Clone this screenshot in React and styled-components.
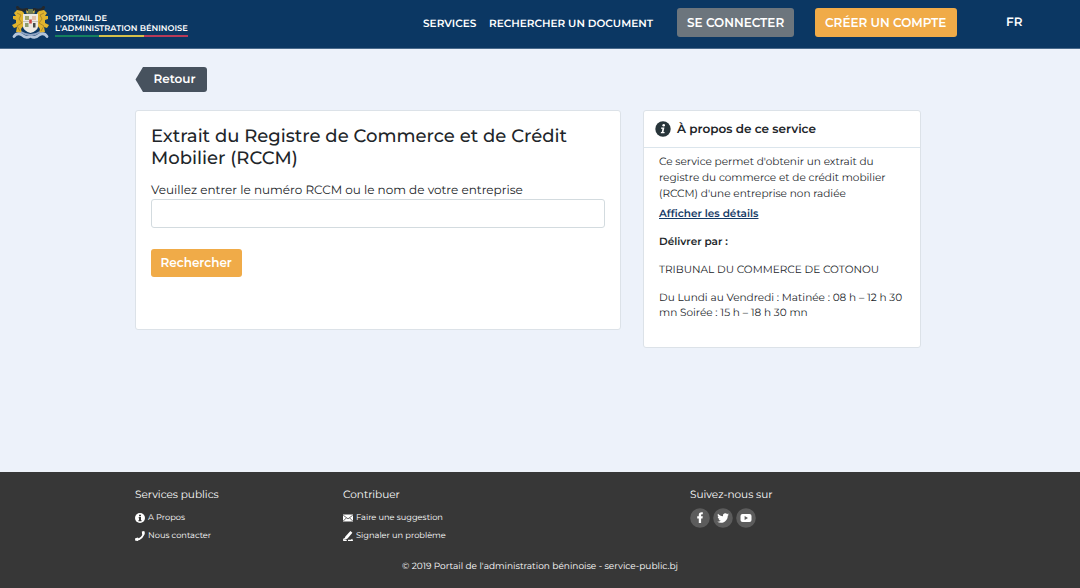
import React from 'react';
import styled, { createGlobalStyle } from 'styled-components';

const GlobalStyle = createGlobalStyle`
  * { box-sizing: border-box; }
  body {
    margin: 0;
    background: #edf2fa;
    color: #212529;
    font-family: Montserrat, Inter, "Liberation Sans", sans-serif;
    text-rendering: geometricPrecision;
  }
  a { color: inherit; text-decoration: none; }
  h1, h2, p, ul { margin: 0; padding: 0; }
  svg { display: block; flex: none; }
`;

const Page = styled.div`
  display: flex;
  flex-direction: column;
  height: 588px;
  overflow: hidden;
`;

const Line = styled.span`
  display: block;
  white-space: nowrap;
`;

/* Header */
const Header = styled.header`
  display: flex;
  align-items: flex-start;
  height: 49px;
  flex: none;
  padding-left: 11px;
  background: #0b3763;
  border-bottom: 1px solid #4a6a8c;
  color: #fff;
  font-weight: 600;
`;

const Brand = styled.a`
  display: flex;
  width: 412px;
  padding-top: 5px;
`;

const BrandName = styled.div`
  width: 133px;
  margin-left: 5px;
  padding-top: 9px;
  font-size: 8.25px;
  line-height: 10px;
`;

const Flag = styled.div`
  height: 2px;
  margin-top: 1px;
  background: linear-gradient(90deg, #14805f 33.3%, #d5c04a 33.3% 66.6%, #b83a58 66.6%);
`;

const NavLink = styled.a`
  width: ${(p) => p.$width}px;
  padding-top: 16px;
  font-size: 10.5px;
  line-height: 16px;
`;

const Button = styled.button`
  display: block;
  width: ${(p) => p.$width}px;
  height: ${(p) => p.$height || 29}px;
  padding: 0 0 0 ${(p) => p.$inset || 10}px;
  border: 0;
  border-radius: 3px;
  background: ${(p) => p.$color};
  color: #fff;
  font: 600 12px/18px Montserrat, Inter, sans-serif;
  text-align: left;
`;

const Actions = styled.div`
  display: flex;
  gap: 21px;
  padding-top: 8px;
`;

const Language = styled.a`
  margin-left: 49px;
  padding-top: 14px;
  font-size: 12px;
  line-height: 18px;
`;

/* Content */
const Main = styled.main`
  width: 786px;
  height: 423px;
  flex: none;
  margin-left: 135px;
  padding-top: 18px;
`;

const Back = styled.a`
  display: block;
  width: 72px;
  height: 25px;
  padding-left: 18.5px;
  border-radius: 3px;
  background: #47525e;
  clip-path: polygon(0.5px 50%, 8px 0, 100% 0, 100% 100%, 8px 100%);
  color: #fff;
  font-size: 12px;
  font-weight: 600;
  line-height: 26px;
`;

const Columns = styled.div`
  display: flex;
  align-items: flex-start;
  justify-content: space-between;
  margin-top: 18px;
`;

const Card = styled.section`
  width: ${(p) => p.$width}px;
  height: ${(p) => p.$height}px;
  background: #fff;
  border: 1px solid #dce2e8;
  border-radius: 3px;
`;

const Form = styled.form`
  padding: 15px 15px 0;
`;

const Title = styled.h1`
  font-size: 18.03px;
  font-weight: 500;
  line-height: 21.5px;
`;

const Label = styled.label`
  display: block;
  margin-top: 13px;
  font-size: 12px;
  line-height: 18px;
`;

const Input = styled.input`
  display: block;
  width: 454px;
  height: 29px;
  margin: -1px 0 21px;
  border: 1px solid #d3dbdf;
  border-radius: 3px;
  background: #fff;
`;

const CardHeader = styled.h2`
  display: flex;
  align-items: center;
  gap: 6px;
  height: 37px;
  padding-left: 11px;
  border-bottom: 1px solid #dbe5ec;
  font-size: 12px;
  font-weight: 600;
`;

const About = styled.div`
  padding: 6px 15px;
  font-size: 10.5px;
  line-height: 15.75px;
`;

const Details = styled.a`
  display: block;
  margin: 5px 0 12px;
  color: #143a66;
  font-weight: 600;
  text-decoration: underline;
`;

const Paragraph = styled.p`
  margin-bottom: 12px;
  font-weight: ${(p) => (p.$strong ? 600 : 400)};
`;

/* Footer */
const Footer = styled.footer`
  height: 116px;
  padding-left: 135px;
  background: #373737;
  color: #fff;
`;

const FooterColumns = styled.div`
  display: flex;
  height: 86px;
  padding-top: 15px;
`;

const FooterColumn = styled.div`
  width: ${(p) => p.$width}px;
`;

const FooterTitle = styled.h2`
  margin-bottom: 6px;
  font-size: 10.5px;
  font-weight: 400;
  line-height: 16px;
`;

const FooterLink = styled.a`
  display: flex;
  align-items: center;
  gap: 3px;
  height: 18px;
  font-size: 8.25px;
`;

const FooterText = styled.span`
  padding-top: 1px;
  line-height: 17px;
`;

const Socials = styled.div`
  display: flex;
  gap: 3px;
  margin-top: -1px;
`;

const Copyright = styled.p`
  padding: 1px 0 0 267px;
  font-size: 9px;
  line-height: 16px;
`;

const Emblem = () => (
  <svg width="39" height="36" viewBox="0 0 39 36">
    <g fill="none" stroke="#25282b" strokeWidth="3" strokeLinecap="round">
      <path d="M16 4.500 Q8 6.500 6.500 2.500" />
      <path d="M23 4.500 Q31 6.500 32.500 2.500" />
    </g>
    <g fill="#e1b42d">
      <path d="M11 6 L6 5 3 8 5 11 2 11 2 14 5 15 5 18 1 20 3 23 6 22 5 27 11 28 10 24 13 20 13 8Z" />
      <path d="M28 6 L33 5 36 8 34 11 37 11 37 14 34 15 34 18 38 20 36 23 33 22 34 27 28 28 29 24 26 20 26 8Z" />
    </g>
    <g fill="none" stroke="#98762c" strokeWidth=".7">
      <path d="M6 8 L10 10 8 14 11 18 6 21 9 26" />
      <path d="M33 8 L29 10 31 14 28 18 33 21 30 26" />
    </g>
    <path d="M12 9 H27 V22 Q26 26 19.500 28 Q13 26 12 22Z" fill="#ece9e1" />
    <path d="M14 11h4v4h-4z" fill="#a3a66a" />
    <path d="M21 11h4v4h-4z" fill="#e4c0a9" />
    <path d="M14 18h3.500v4H14z" fill="#8d9b6b" />
    <path d="M22 18h2.500v4.500H22z" fill="#454b49" />
    <path d="M18.200 14.500h2.600v4h-2.600z" fill="#c8433f" />
    <path d="M12 16.300h6v.8h-6zM21 16.300h6v.8h-6z" fill="#b8b7b0" />
    <path d="M15 4.500 Q16 7 19.500 5.500 Q23 7 24 4.500 L23.500 8.500 H15.500Z" fill="#c8ae48" />
    <path d="M17 4h5v4h-5z" fill="#6f7d50" />
    <path d="M3 31.500 Q6 27 11 30 Q15 34 19.500 31 Q24 34 28 30 Q33 27 36 31.500" fill="none" stroke="#b4c5da" strokeWidth="2.800" strokeLinecap="round" />
    <path d="M10 27 Q19.500 33 29 27" fill="none" stroke="#8ea3c2" strokeWidth="2" />
  </svg>
);

const SolidInfo = () => (
  <svg width="10" height="10" viewBox="0 0 10 10">
    <circle cx="5" cy="5" r="5" fill="#fff" />
    <path d="M4 1.700h2v1.500H4z M3.700 4h2.300v3h.5v1.200H3.500V7H4V5.200h-.3z" fill="#373737" />
  </svg>
);

const InfoIcon = () => (
  <svg width="16" height="16" viewBox="0 0 16 16">
    <circle cx="8" cy="8" r="7.700" fill="#28353a" />
    <circle cx="8.700" cy="4.200" r="1.300" fill="#fff" />
    <path d="M6.200 6.600h3.200L8.500 11h1.200l-.3 1.200H5.700L6 11h.8l.6-3.200H6z" fill="#fff" />
  </svg>
);

const PhoneIcon = () => (
  <svg width="10" height="10" viewBox="0 0 10 10">
    <path d="M8.500 1.500C9 5 5.300 8.600 1.500 8.600" fill="none" stroke="#fff" strokeWidth="2" />
    <path d="M6.800.5 9.100 0 9.600.8 9.600 3.500 7.200 3.500zM.2 7.300 3 6.500 4 8.600 2.700 9.900 0 9.500z" fill="#fff" />
  </svg>
);

const MailIcon = () => (
  <svg width="10" height="8" viewBox="0 0 10 8">
    <path d="M0 .5h10v7H0z" fill="#fff" />
    <path d="M.3 1.300 5 4.800l4.700-3.500M.3 7l3-3M9.700 7l-3-3" fill="none" stroke="#373737" strokeWidth=".75" />
  </svg>
);

const PenIcon = () => (
  <svg width="10" height="10" viewBox="0 0 10 10">
    <path d="M7.400 0 9.400 1.800 4.600 7.500 1.300 8.900 2.200 5.700z" fill="#fff" />
    <path d="M.2 9.400h3.500M5 9.400h4.300L8.700 8M1.500 7 .3 9.400" fill="none" stroke="#fff" strokeWidth="1.100" />
  </svg>
);

const SocialIcon = ({ children }) => (
  <svg width="20" height="20" viewBox="0 0 20 20">
    <circle cx="10" cy="10" r="9.800" fill="#5c5c5c" />
    {children}
  </svg>
);

export default function App() {
  return (
    <>
      <GlobalStyle />
      <Page>
        <Header>
          <Brand href="#">
            <Emblem />
            <BrandName>
              <Line>PORTAIL DE</Line>
              <Line>L'ADMINISTRATION BÉNINOISE</Line>
              <Flag />
            </BrandName>
          </Brand>
          <NavLink href="#" $width={66}>SERVICES</NavLink>
          <NavLink href="#" $width={188}>RECHERCHER UN DOCUMENT</NavLink>
          <Actions>
            <Button $width={117} $color="#6c757d">SE CONNECTER</Button>
            <Button $width={142} $color="#f0ab48">CRÉER UN COMPTE</Button>
          </Actions>
          <Language href="#">FR</Language>
        </Header>

        <Main>
          <Back href="#">Retour</Back>
          <Columns>
            <Card $width={486} $height={220}>
              <Form>
                <Title>
                  <Line>Extrait du Registre de Commerce et de Crédit</Line>
                  <Line>Mobilier (RCCM)</Line>
                </Title>
                <Label htmlFor="rccm">Veuillez entrer le numéro RCCM ou le nom de votre entreprise</Label>
                <Input id="rccm" />
                <Button type="button" $width={90.5} $height={28} $inset={9.5} $color="#f0ab48">Rechercher</Button>
              </Form>
            </Card>
            <Card $width={278} $height={238}>
              <CardHeader><InfoIcon /><Line>À propos de ce service</Line></CardHeader>
              <About>
                <p>
                  <Line>Ce service permet d'obtenir un extrait du</Line>
                  <Line>registre du commerce et de crédit mobilier</Line>
                  <Line>(RCCM) d'une entreprise non radiée</Line>
                </p>
                <Details href="#">Afficher les détails</Details>
                <Paragraph $strong>Délivrer par :</Paragraph>
                <Paragraph>TRIBUNAL DU COMMERCE DE COTONOU</Paragraph>
                <Paragraph>
                  <Line>Du Lundi au Vendredi : Matinée : 08 h – 12 h 30</Line>
                  <Line>mn Soirée : 15 h – 18 h 30 mn</Line>
                </Paragraph>
              </About>
            </Card>
          </Columns>
        </Main>

        <Footer>
          <FooterColumns>
            <FooterColumn $width={208}>
              <FooterTitle>Services publics</FooterTitle>
              <FooterLink href="#"><SolidInfo /><FooterText>A Propos</FooterText></FooterLink>
              <FooterLink href="#"><PhoneIcon /><FooterText>Nous contacter</FooterText></FooterLink>
            </FooterColumn>
            <FooterColumn $width={347}>
              <FooterTitle>Contribuer</FooterTitle>
              <FooterLink href="#"><MailIcon /><FooterText>Faire une suggestion</FooterText></FooterLink>
              <FooterLink href="#"><PenIcon /><FooterText>Signaler un problème</FooterText></FooterLink>
            </FooterColumn>
            <FooterColumn $width={200}>
              <FooterTitle>Suivez-nous sur</FooterTitle>
              <Socials>
                <SocialIcon>
                  <path d="M8.800 15v-4.500H7.200V8.300h1.600V6.800C8.800 4.900 10 4 12.800 4.300v1.900c-1.400-.1-1.700.1-1.700 1v1.100h1.700l-.3 2.200h-1.400V15z" fill="#fff" />
                </SocialIcon>
                <SocialIcon>
                  <path transform="translate(4.2 4.200) scale(.49)" fill="#fff" d="M23.950 4.570a10 10 0 0 1-2.820.77 4.960 4.960 0 0 0 2.160-2.720c-.95.550-2 .960-3.130 1.180a4.920 4.920 0 0 0-8.380 4.480C7.690 8.090 4.070 6.130 1.640 3.160a4.820 4.820 0 0 0-.67 2.470c0 1.710.87 3.210 2.190 4.100a4.900 4.900 0 0 1-2.230-.62v.06a4.920 4.920 0 0 0 3.950 4.830 5 5 0 0 1-2.210.080 4.940 4.940 0 0 0 4.600 3.420A9.870 9.870 0 0 1 0 19.540a14 14 0 0 0 7.550 2.210c9.050 0 14-7.500 14-13.980 0-.21 0-.42-.02-.63a9.940 9.940 0 0 0 2.420-2.570z" />
                </SocialIcon>
                <SocialIcon>
                  <rect x="4.500" y="6" width="11" height="8" rx="2" fill="#fff" />
                  <path d="M8.600 8 12 10l-3.400 2z" fill="#5c5c5c" />
                </SocialIcon>
              </Socials>
            </FooterColumn>
          </FooterColumns>
          <Copyright>© 2019 Portail de l'administration béninoise - service-public.bj</Copyright>
        </Footer>
      </Page>
    </>
  );
}
